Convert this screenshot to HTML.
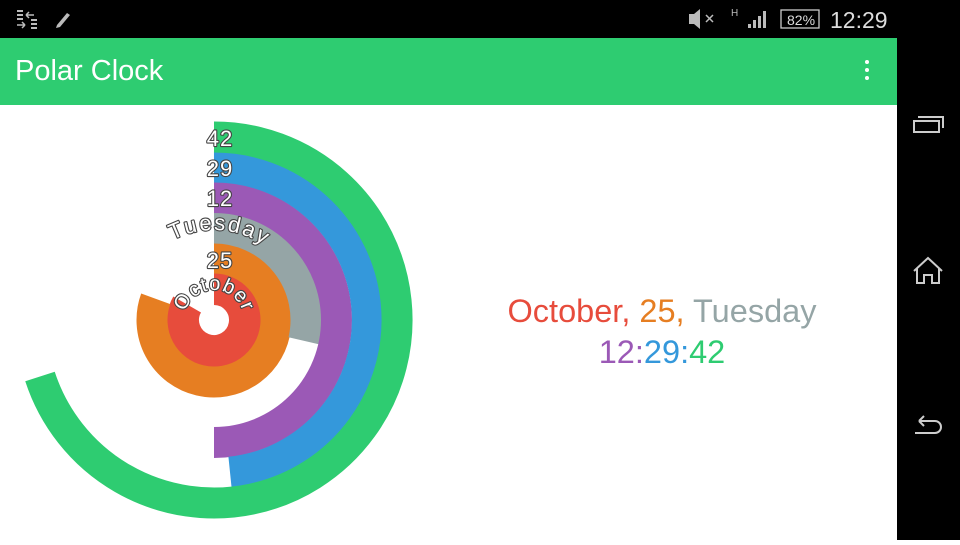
<!DOCTYPE html>
<html><head><meta charset="utf-8"><style>
body{margin:0;width:960px;height:540px;overflow:hidden;background:#fff;font-family:"Liberation Sans",sans-serif;position:relative}
#sb{position:absolute;left:0;top:0;width:960px;height:38px;background:#000;color:#ddd}
#ab{position:absolute;left:0;top:38px;width:897px;height:67px;background:#2ecc71;color:#fff}
#nav{position:absolute;left:897px;top:38px;width:63px;height:502px;background:#000}
.t{position:absolute;left:480px;width:364px;text-align:center;font-size:32.5px;white-space:nowrap}
</style></head><body>
<div id="sb">
<svg width="960" height="38" style="position:absolute;left:0;top:0">
<g fill="#bbb"><rect x="17" y="10" width="6" height="2"/><rect x="17" y="14" width="6" height="2"/><rect x="17" y="18" width="6" height="2"/>
<rect x="31" y="19" width="6" height="2"/><rect x="31" y="23" width="6" height="2"/><rect x="31" y="27" width="6" height="2"/></g>
<path d="M26 15h8M26 15l3-3M26 15l3 3M17 25h8M25 25l-3-3M25 25l-3 3" stroke="#bbb" stroke-width="1.5" fill="none"/>
<path d="M57 25l10-12 3 2-10 12-4 1z" fill="#bbb"/>
<path d="M689 14h5l6-5v20l-6-5h-5z" fill="#bbb"/>
<path d="M706 15l7 7M713 15l-7 7" stroke="#bbb" stroke-width="1.5"/>
<text x="731" y="16" font-size="10" fill="#bbb">H</text>
<path d="M748 28h3v-4h-3zM753 28h3v-8h-3zM758 28h3v-12h-3zM763 28h3v-17h-3z" fill="#bbb"/>
<rect x="781" y="10" width="38" height="18" fill="none" stroke="#ccc" stroke-width="1.3"/>
<text x="787" y="25" font-size="14" fill="#ddd">82%</text>
<text x="830" y="28" font-size="23" fill="#ddd">12:29</text>
</svg></div>
<div id="ab"><div style="position:absolute;left:15px;top:17px;font-size:29px">Polar Clock</div>
<div style="position:absolute;left:865px;top:22px;width:4px">
<div style="width:4px;height:4px;background:#fff;border-radius:2px;margin-bottom:4px"></div><div style="width:4px;height:4px;background:#fff;border-radius:2px;margin-bottom:4px"></div><div style="width:4px;height:4px;background:#fff;border-radius:2px"></div></div></div>
<div id="nav"><svg width="63" height="502">
<g fill="none" stroke="#ccc" stroke-width="2">
<rect x="17" y="83" width="25" height="11"/><path d="M21 79h25v11"/>
<path d="M17 233l14-13 14 13M20 230v15h7v-8h8v8h7v-15"/>
<path d="M22 383h16a6 6 0 0 1 0 12h-20M22 383l5-5M22 383l5 5"/>
</g></svg></div>
<svg width="480" height="540" style="position:absolute;left:0;top:0">
<g fill="none" stroke-width="31">
<path d="M214 289A31 31 0 1 1 187.15 304.5" stroke="#e74c3c" stroke-width="32"/>
<path d="M214 258A62 62 0 1 1 155.74 298.8" stroke="#e67e22"/>
<path d="M214 228A92 92 0 0 1 303.64 340.7" stroke="#95a5a6"/>
<path d="M214 197.5A122.5 122.5 0 0 1 214 442.5" stroke="#9b59b6"/>
<path d="M214 167A153 153 0 0 1 230 472.2" stroke="#3498db"/>
<path d="M214 137A183 183 0 1 1 40 376.5" stroke="#2ecc71"/>
</g>
<defs>
<path id="pt" d="M124 320a90 90 0 0 1 180 0"/>
<path id="po" d="M184 320a30 30 0 0 1 60 0"/>
</defs>
<g fill="#fff" stroke="#444" stroke-width="2.2" stroke-linejoin="round" font-size="22" text-anchor="middle" paint-order="stroke" letter-spacing="1">
<text x="220" y="146">42</text><text x="220" y="176">29</text><text x="220" y="206">12</text><text x="220" y="268">25</text>
<text letter-spacing="2"><textPath href="#pt" startOffset="52%">Tuesday</textPath></text>
<text font-size="20"><textPath href="#po" startOffset="50%">October</textPath></text>
</g>
</svg>
<div class="t" style="top:293px"><span style="color:#e74c3c">October,</span> <span style="color:#e67e22">25,</span> <span style="color:#95a5a6">Tuesday</span></div>
<div class="t" style="top:334px"><span style="color:#9b59b6">12:</span><span style="color:#3498db">29:</span><span style="color:#2ecc71">42</span></div>
</body></html>
